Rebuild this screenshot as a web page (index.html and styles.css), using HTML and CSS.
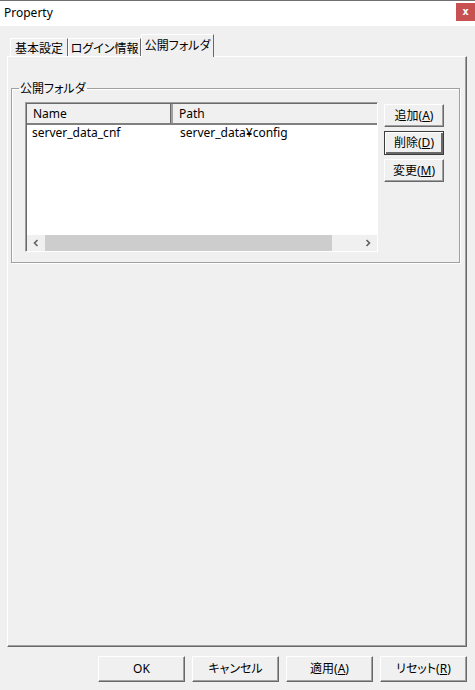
FILE: index.html
```html
<!DOCTYPE html>
<html lang="ja">

<head>
    <meta http-equiv="Content-Type" content="text/html;charset=UTF-8">
    <title>Property</title>
    <link rel="stylesheet" href="styles.css">
</head>

<body>
    <div class="window">
        <div class="titlebar">
            <span class="title">Property</span>
            <span class="close">x</span>
        </div>

        <div class="main">
            <div class="tabs">
                <div class="tab tab-basic">基本設定</div>
                <div class="tab tab-login">ログイン情報</div>
                <div class="tab tab-folder active">公開フォルダ</div>
            </div>

            <div class="panel">
                <fieldset class="group">
                    <legend class="group-title">公開フォルダ</legend>
                    <div class="group-body">
                        <div class="list">
                            <div class="list-header">
                                <div class="col col-name">Name</div>
                                <div class="col col-path">Path</div>
                            </div>
                            <div class="list-rows">
                                <div class="row">
                                    <div class="cell col-name">server_data_cnf</div>
                                    <div class="cell col-path">server_data¥config</div>
                                </div>
                            </div>
                            <div class="hscroll">
                                <span class="arrow">
                                    <svg width="8" height="8" viewBox="0 0 8 8"><path d="M5.5 1 L2.5 4 L5.5 7" fill="none" stroke="#606060" stroke-width="1.6"/></svg>
                                </span>
                                <span class="thumb"></span>
                                <span class="track"></span>
                                <span class="arrow">
                                    <svg width="8" height="8" viewBox="0 0 8 8"><path d="M2.5 1 L5.5 4 L2.5 7" fill="none" stroke="#606060" stroke-width="1.6"/></svg>
                                </span>
                            </div>
                        </div>

                        <div class="side-buttons">
                            <button class="btn">追加(<u>A</u>)</button>
                            <button class="btn default">削除(<u>D</u>)</button>
                            <button class="btn">変更(<u>M</u>)</button>
                        </div>
                    </div>
                </fieldset>
            </div>

            <div class="footer">
                <button class="btn wide">OK</button>
                <button class="btn wide">キャンセル</button>
                <button class="btn wide">適用(<u>A</u>)</button>
                <button class="btn wide">リセット(<u>R</u>)</button>
            </div>
        </div>
    </div>
</body>

</html>
```

FILE: styles.css
```css
body {
    margin: 0;
    background-color: #f0f0f0;
    color: #000000;
    font-family: "Noto Sans", "Noto Sans CJK JP", sans-serif;
    font-size: 12px;
    font-feature-settings: "palt";
}

.window {
    width: 475px;
    height: 690px;
    overflow: hidden;
}

.titlebar {
    height: 25px;
    border-top: 1px solid #707070;
    background-color: #ffffff;
    display: flex;
    justify-content: space-between;
    align-items: flex-start;
}

.title {
    padding-left: 4px;
    line-height: 24px;
}

.close {
    width: 19px;
    height: 18px;
    margin-top: 2px;
    background-color: #c75050;
    color: #ffffff;
    font-family: "DejaVu Sans Mono", monospace;
    font-weight: bold;
    font-size: 11px;
    line-height: 17px;
    text-align: center;
}

.main {
    padding: 8px 8px 0 7px;
}

.tabs {
    display: flex;
    align-items: flex-end;
    height: 22px;
    padding-left: 3px;
    position: relative;
    z-index: 1;
}

.tab {
    font-family: "Noto Sans CJK JP", sans-serif;
    white-space: nowrap;
    height: 17px;
    line-height: 17px;
    text-align: center;
    border: 1px solid;
    border-color: #ffffff #696969 transparent #ffffff;
    border-bottom: none;
}

.tab-basic {
    width: 56px;
}

.tab-login {
    width: 71px;
}

.tab-folder {
    width: 71px;
}

.tab.active {
    height: 22px;
    line-height: 20px;
    margin-bottom: -1px;
    background-color: #f0f0f0;
}

.panel {
    height: 589px;
    border: 1px solid;
    border-color: #ffffff #696969 #696969 #ffffff;
    box-shadow: inset -1px -1px 0 #a0a0a0;
    padding: 0 6px 0 3px;
}

.group {
    margin: 23px 0 0 0;
    padding: 0;
    border: 1px solid #a0a0a0;
    box-shadow: inset 1px 1px 0 #ffffff, 1px 1px 0 #ffffff;
    min-width: 0;
}

.group-title {
    font-family: "Noto Sans CJK JP", sans-serif;
    line-height: 16px;
    margin-left: 7px;
    padding: 0 1px;
}

.group-body {
    display: flex;
    gap: 6px;
    padding: 6px 15px 10px 13px;
}

.list {
    width: 351px;
    height: 147px;
    border: 1px solid;
    border-color: #a0a0a0 #ffffff #ffffff #a0a0a0;
    box-shadow: inset 1px 1px 0 #696969;
    background-color: #ffffff;
    display: flex;
    flex-direction: column;
    padding: 1px 0 0 1px;
    box-sizing: content-box;
}

.list-header {
    display: flex;
    height: 19px;
    background-color: #f0f0f0;
    border-bottom: 2px solid #808080;
}

.col {
    line-height: 20px;
    padding-left: 6px;
    box-sizing: border-box;
}

.list-header .col-name {
    border-right: 2px solid #a0a0a0;
    box-shadow: inset -1px 0 0 #696969;
}

.col-name {
    width: 146px;
}

.col-path {
    flex: 1;
}

.list-rows {
    flex: 1;
}

.row {
    display: flex;
    height: 17px;
}

.cell {
    line-height: 16px;
    padding-left: 5px;
    box-sizing: border-box;
}

.cell.col-path {
    padding-left: 7px;
}

.hscroll {
    display: flex;
    height: 16px;
    background-color: #f0f0f0;
}

.arrow {
    width: 18px;
    display: flex;
    justify-content: center;
    align-items: center;
}

.thumb {
    width: 287px;
    background-color: #cdcdcd;
}

.track {
    flex: 1;
}

.side-buttons {
    display: flex;
    flex-direction: column;
    gap: 4px;
    padding-top: 2px;
}

.btn {
    font-family: "Noto Sans", "Noto Sans CJK JP", sans-serif;
    font-size: 12px;
    font-feature-settings: "palt";
    color: #000000;
    background-color: #f0f0f0;
    border: 1px solid;
    border-color: #ffffff #696969 #696969 #ffffff;
    box-shadow: inset -1px -1px 0 #a0a0a0;
    width: 60px;
    height: 23px;
    padding: 0;
    margin: 0;
    line-height: 20px;
    white-space: nowrap;
}

.side-buttons .btn.default {
    height: 24px;
    border: 1px solid #3c3c3c;
    box-shadow: inset 1px 1px 0 #ffffff, inset -2px -2px 0 #696969;
}

.footer {
    display: flex;
    justify-content: flex-end;
    gap: 7px;
    margin-top: 9px;
}

.btn.wide {
    width: 87px;
    height: 26px;
}
```
